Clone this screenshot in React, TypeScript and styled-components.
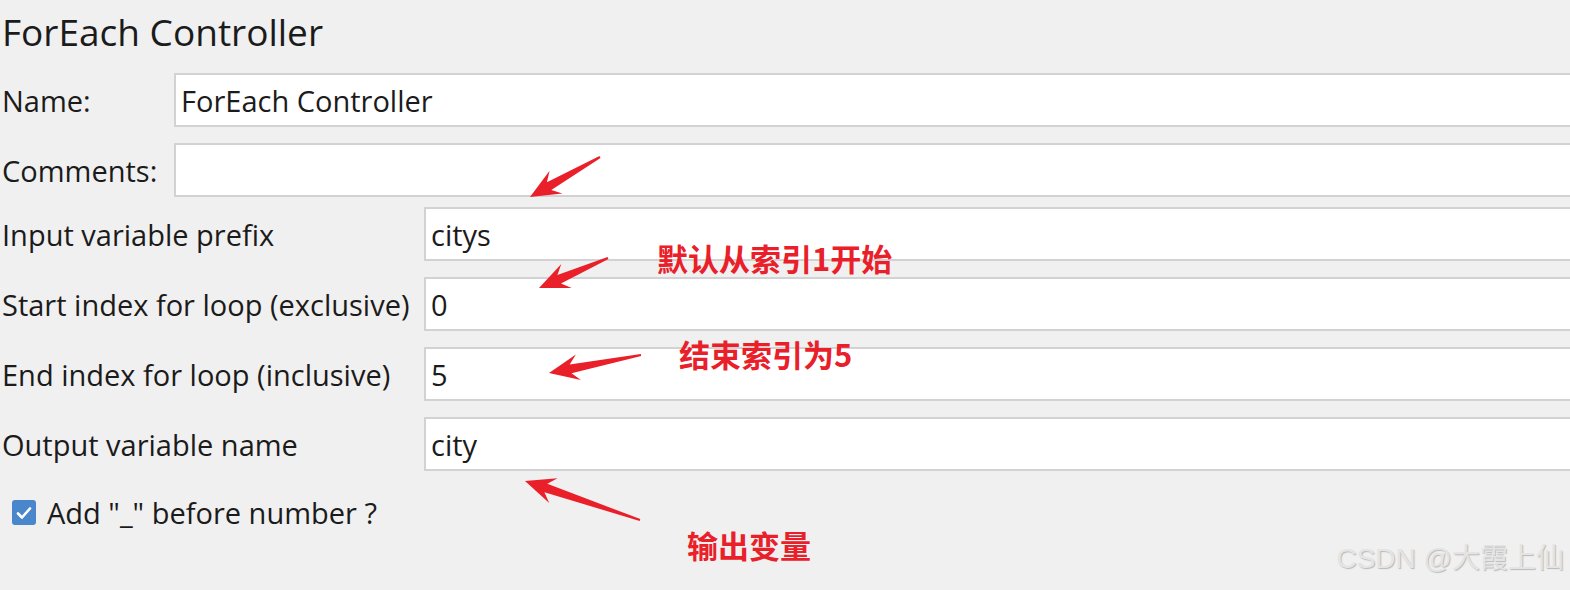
import React from "react";
import styled, { createGlobalStyle } from "styled-components";

const Global = createGlobalStyle`
  html, body { margin: 0; padding: 0; background: #f0f0f0; overflow: hidden; }
  #root { width: 1570px; height: 590px; }
`;

const Page = styled.div`
  position: relative;
  width: 1570px;
  height: 590px;
  overflow: hidden;
  background: #f0f0f0;
  font-family: "Open Sans", "Noto Sans", sans-serif;
  color: #1b1b1b;
  display: flex;
  flex-direction: column;
`;

const Title = styled.h1`
  margin: 0;
  padding: 10px 0 0 2px;
  height: 61px;
  box-sizing: border-box;
  font-size: 37px;
  font-weight: 400;
  line-height: 44px;
`;

const Section = styled.div<{ $gap: number; $top: number }>`
  display: flex;
  flex-direction: column;
  gap: ${(p) => p.$gap}px;
  margin-top: ${(p) => p.$top}px;
`;

const Row = styled.div<{ $label: number }>`
  display: grid;
  grid-template-columns: ${(p) => p.$label}px 1fr;
  align-items: center;
  height: 54px;
  margin-right: -30px;
`;

const Label = styled.span`
  padding-left: 2px;
  font-size: 29px;
  white-space: nowrap;
`;

const Field = styled.div`
  height: 54px;
  box-sizing: border-box;
  border: 2px solid #d2d2d2;
  background: #ffffff;
  display: flex;
  align-items: center;
  padding-left: 5px;
  font-size: 29px;
`;

const CheckRow = styled.label`
  display: flex;
  align-items: center;
  gap: 11px;
  margin-top: 22px;
  padding-left: 12px;
  font-size: 29px;
`;

const Box = styled.span`
  width: 24px;
  height: 25px;
  border-radius: 3px;
  background: #4a86cb;
  display: inline-flex;
  align-items: center;
  justify-content: center;
`;

const Overlay = styled.svg`
  position: absolute;
  left: 0;
  top: 0;
  pointer-events: none;
`;

const Note = styled.div<{ $x: number; $y: number }>`
  position: absolute;
  left: ${(p) => p.$x}px;
  top: ${(p) => p.$y}px;
  font-family: "Noto Sans CJK SC", "Noto Sans", sans-serif;
  font-weight: 700;
  font-size: 31px;
  line-height: 1;
  color: #e9202a;
  white-space: nowrap;
`;

const Watermark = styled.div`
  position: absolute;
  right: 6px;
  top: 542px;
  font-family: "Liberation Sans", "Noto Sans CJK SC", sans-serif;
  font-size: 28px;
  line-height: 1.2;
  color: #e4e4e4;
  text-shadow: 1px 1px 1px #b9b9b9;
  white-space: nowrap;
`;

type Pt = [number, number];

function arrowPoints(tail: Pt, tip: Pt): string {
  const dx = tail[0] - tip[0];
  const dy = tail[1] - tip[1];
  const len = Math.hypot(dx, dy);
  const d: Pt = [dx / len, dy / len];
  const n: Pt = [-d[1], d[0]];
  const L = 30;
  const W = 13;
  const notch = 22;
  const sw = 4.5;
  const tw = 1;
  const at = (base: Pt, along: number, side: number): string =>
    `${(base[0] + d[0] * along + n[0] * side).toFixed(1)},${(base[1] + d[1] * along + n[1] * side).toFixed(1)}`;
  return [
    at(tip, 0, 0),
    at(tip, L, W),
    at(tip, notch, sw),
    at(tail, 0, tw),
    at(tail, 0, -tw),
    at(tip, notch, -sw),
    at(tip, L, -W),
  ].join(" ");
}

const arrows: { tail: Pt; tip: Pt }[] = [
  { tail: [600, 157], tip: [530, 197] },
  { tail: [608, 258], tip: [539, 288] },
  { tail: [641, 355], tip: [549, 373] },
  { tail: [640, 520], tip: [525, 481] },
];

const topRows = [
  { label: "Name:", value: "ForEach Controller" },
  { label: "Comments:", value: "" },
];

const mainRows = [
  { label: "Input variable prefix", value: "citys" },
  { label: "Start index for loop (exclusive)", value: "0" },
  { label: "End index for loop (inclusive)", value: "5" },
  { label: "Output variable name", value: "city" },
];

export default function App() {
  return (
    <>
      <Global />
      <Page>
        <Title>ForEach Controller</Title>
        <Section $gap={16} $top={12}>
          {topRows.map((r) => (
            <Row key={r.label} $label={174}>
              <Label>{r.label}</Label>
              <Field>{r.value}</Field>
            </Row>
          ))}
        </Section>
        <Section $gap={16} $top={10}>
          {mainRows.map((r) => (
            <Row key={r.label} $label={424}>
              <Label>{r.label}</Label>
              <Field>{r.value}</Field>
            </Row>
          ))}
        </Section>
        <CheckRow>
          <Box>
            <svg width="16" height="14" viewBox="0 0 16 14">
              <path d="M2 7.5 L6 11.5 L14 2.5" fill="none" stroke="#fff" strokeWidth="2.6" strokeLinecap="round" strokeLinejoin="round" />
            </svg>
          </Box>
          Add "_" before number ?
        </CheckRow>
        <Overlay width="1570" height="590" viewBox="0 0 1570 590">
          {arrows.map((a, i) => (
            <polygon key={i} points={arrowPoints(a.tail, a.tip)} fill="#e9202a" />
          ))}
        </Overlay>
        <Note $x={657} $y={242}>默认从索引1开始</Note>
        <Note $x={679} $y={338}>结束索引为5</Note>
        <Note $x={687} $y={529}>输出变量</Note>
        <Watermark>CSDN @大霞上仙</Watermark>
      </Page>
    </>
  );
}
